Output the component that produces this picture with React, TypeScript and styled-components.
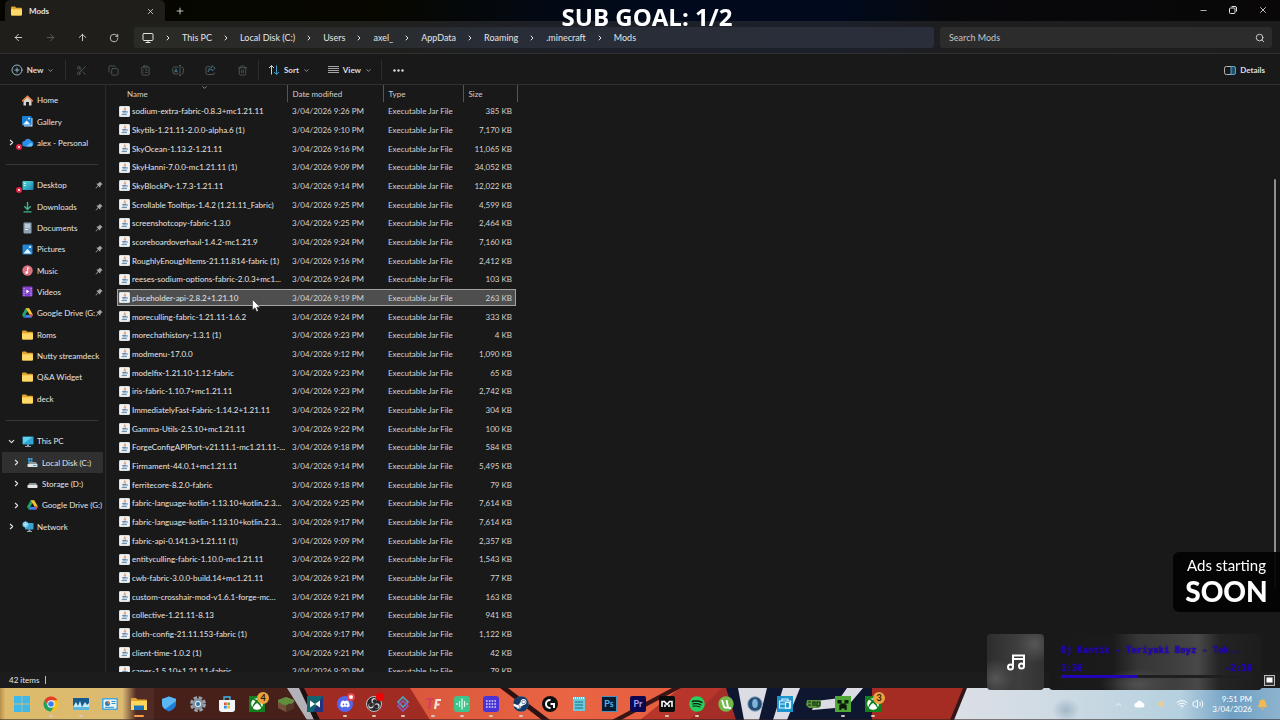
import React from 'react';
import styled, { createGlobalStyle, css } from 'styled-components';
import {
  ArrowLeft, ArrowRight, ArrowUp, Bell, ChevronDown, ChevronRight, ChevronUp, CirclePlus,
  ClipboardList, Copy, Minus, Monitor, Plus, RotateCw, Scissors, Search, Trash2,
  Volume2, Wifi, X,
} from 'lucide-react';
import { FaDiscord, FaSpotify, FaSteam, FaXbox } from 'react-icons/fa';

const GlobalStyle = createGlobalStyle`
  * { box-sizing: border-box; }
  body {
    margin: 0;
    background: #191919;
    color: #e4e4e4;
    font-family: Lato, "Open Sans", sans-serif;
    font-size: 8px;
    line-height: 12px;
    overflow: hidden;
  }
  button, input { font: inherit; color: inherit; }
  a { color: inherit; text-decoration: none; }
  svg { display: block; flex: none; }
`;

const Screen = styled.div`
  height: 100vh;
  display: flex;
  flex-direction: column;
`;

/* ---------- window chrome ---------- */

const TitleBar = styled.header`
  height: 21px;
  display: flex;
  padding-left: 5px;
  background: linear-gradient(90deg, #060600 0%, #070700 30%, #030913 42%, #000a1c 52%, #000a1c 66%, #07080c 74%, #090707 100%);
`;

const Tab = styled.div`
  width: 160px;
  display: flex;
  align-items: center;
  gap: 7px;
  padding: 1px 10px 0 6px;
  border-radius: 5px 5px 0 0;
  background: #1f1e1a;
  font-weight: 700;
`;

const TabTitle = styled.span`
  flex: 1;
`;

const PlainButton = styled.button`
  display: flex;
  align-items: center;
  justify-content: center;
  padding: 0;
  border: 0;
  background: none;
`;

const NewTab = styled(PlainButton)`
  width: 30px;
  padding-top: 1px;
`;

const WindowControls = styled.div`
  display: flex;
  margin-left: auto;
  padding-right: 2px;
`;

const ControlButton = styled(PlainButton)`
  width: 30px;
  height: 20px;
`;

const AddressRow = styled.div`
  height: 33px;
  display: flex;
  align-items: center;
  padding: 1px 8px 0 2px;
  border-bottom: 1px solid #30302f;
  background: linear-gradient(90deg, #1f1e1a 0%, #1f1f1c 30%, #1d2028 44%, #1c202a 66%, #1e1e20 74%, #1e1d1d 100%);
`;

const NavButton = styled(PlainButton)<{ $dim?: boolean }>`
  width: 32px;
  height: 21px;
  color: ${(p) => (p.$dim ? '#5d5d5a' : '#d8d8d8')};
`;

const Breadcrumbs = styled.nav`
  flex: 792;
  height: 21px;
  display: flex;
  align-items: center;
  gap: 10px;
  margin-left: 4px;
  padding-left: 8px;
  border-radius: 3px;
  background: linear-gradient(90deg, #2a2a26 0%, #2a2b2a 25%, #282d37 45%, #292e3a 100%);
  font-size: 9px;
`;

const SearchBox = styled.label`
  flex: 316;
  height: 21px;
  display: flex;
  align-items: center;
  margin-left: 6px;
  padding: 0 7px 0 9px;
  border-radius: 3px;
  background: #2c2c2c;
`;

const SearchInput = styled.input`
  flex: 1;
  min-width: 0;
  padding: 0;
  border: 0;
  outline: 0;
  background: none;
  font-size: 9px;
  &::placeholder { color: #c4c4c4; opacity: 1; }
`;

const CommandBar = styled.div`
  height: 31px;
  display: flex;
  align-items: center;
  padding: 2px 15px 0 0;
  border-bottom: 1px solid #313131;
  font-weight: 700;
`;

const CommandGroup = styled.div<{ $width: number; $last?: boolean }>`
  width: ${(p) => p.$width}px;
  height: 20px;
  display: flex;
  justify-content: space-around;
  border-right: ${(p) => (p.$last ? 0 : 1)}px solid #2d2d2d;
`;

const Command = styled(PlainButton)<{ $dim?: boolean }>`
  gap: 4px;
  color: ${(p) => (p.$dim ? '#4b5659' : '#dedede')};
`;

const DetailsButton = styled(Command)`
  margin-left: auto;
`;

/* ---------- navigation pane ---------- */

const Content = styled.div`
  flex: 1;
  min-height: 0;
  display: flex;
`;

const Sidebar = styled.nav`
  width: 106px;
  flex: none;
  padding: 4px 2px 0 2px;
  border-right: 1px solid #2b2b2b;
`;

const NavList = styled.ul`
  margin: 0;
  padding: 0;
  list-style: none;
`;

const NavItem = styled.li<{ $active?: boolean }>`
  height: 21px;
  background: ${(p) => (p.$active ? '#303030' : 'transparent')};
  &:nth-child(3n + 1) { height: 22px; }
`;

const NavLink = styled.a<{ $nested?: boolean }>`
  height: 100%;
  display: flex;
  align-items: center;
  padding-left: ${(p) => (p.$nested ? 10 : 5)}px;
`;

const Twisty = styled.span`
  width: 15px;
  flex: none;
`;

const NavIcon = styled.span`
  position: relative;
  width: 15px;
  flex: none;
`;

const ErrorBadge = styled.svg`
  position: absolute;
  left: -6px;
  bottom: -3px;
`;

const NavLabel = styled.span`
  flex: 1;
  min-width: 0;
  overflow: hidden;
  white-space: nowrap;
`;

const Divider = styled.hr`
  height: 1px;
  margin: 11px 5px 9px 4px;
  border: 0;
  background: #383838;
`;

/* ---------- file list ---------- */

const FilePane = styled.main`
  flex: 1;
  min-width: 0;
  overflow: hidden;
  padding-left: 10px;
`;

const FileTable = styled.table`
  width: 401px;
  table-layout: fixed;
  border-collapse: collapse;
`;

const HeadCell = styled.th<{ $width: number }>`
  position: relative;
  width: ${(p) => p.$width}px;
  height: 17px;
  padding: 0 5px;
  border-right: 1px solid #555;
  color: #d0d0d0;
  font-weight: 400;
  text-align: left;
  &:first-child { padding-left: 11px; }
`;

const SortCaret = styled.span`
  position: absolute;
  top: -1px;
  left: 50%;
`;

const FileRow = styled.tr<{ $selected: boolean }>`
  height: 19px;
  &:nth-child(3n + 1) { height: 18px; }
  ${(p) => p.$selected && css`
    background: linear-gradient(#4e4e4e, #4e4e4e) center / calc(100% - 2px) calc(100% - 2px) no-repeat;
    outline: 1px solid #a3a3a3;
    outline-offset: -2px;
  `}
`;

const Cell = styled.td<{ $end?: boolean }>`
  padding: 0 5px;
  color: #d2d2d2;
  text-align: ${(p) => (p.$end ? 'right' : 'left')};
  white-space: nowrap;
  &:first-child { padding: 0 0 0 3px; }
`;

const FileName = styled.div`
  display: flex;
  align-items: center;
  gap: 2px;
  color: #e6e6e6;
`;

const ScrollTrack = styled.div`
  width: 2px;
  margin-right: 4px;
  display: flex;
  flex-direction: column;
`;

const ScrollThumb = styled.div`
  flex: 70;
  border-radius: 1px;
  background: #8f8f8f;
`;

const ScrollGap = styled.div<{ $grow: number }>`
  flex: ${(p) => p.$grow};
`;

const StatusBar = styled.footer`
  height: 16px;
  display: flex;
  align-items: center;
  padding: 0 5px 0 9px;
  background: #1c1c1c;
`;

const StatusCount = styled.span`
  padding-right: 6px;
  border-right: 1px solid #bdbdbd;
  line-height: 8px;
`;

const ViewToggle = styled(PlainButton)`
  margin-left: auto;
`;

/* ---------- taskbar ---------- */

const Taskbar = styled.div`
  position: relative;
  height: 32px;
  flex: none;
  display: flex;
  padding-left: 7px;
  color: #fff;
`;

const Wallpaper = styled.svg`
  position: absolute;
  inset: 0;
  width: 100%;
  height: 100%;
`;

const Apps = styled.div`
  position: relative;
  display: flex;
`;

const AppButton = styled(PlainButton)<{ $run?: 'dot' | 'wide' }>`
  position: relative;
  width: 29px;
  height: 32px;
  &:nth-child(3n + 2) { width: 30px; }
  ${(p) => p.$run && css`
    &::after {
      content: "";
      position: absolute;
      bottom: 3px;
      width: ${p.$run === 'wide' ? 10 : 4}px;
      height: 2px;
      border-radius: 1px;
      background: ${p.$run === 'wide' ? '#f5a04a' : '#d9c3b8'};
    }
  `}
  ${(p) => p.$run === 'wide' && css`background: rgba(255, 255, 255, 0.05);`}
`;

const CountBadge = styled.span`
  position: absolute;
  top: 4px;
  right: 2px;
  width: 12px;
  height: 12px;
  border-radius: 50%;
  background: #eda23c;
  color: #2a1a08;
  font-size: 9px;
  font-weight: 700;
  line-height: 12px;
  text-align: center;
`;

const DotBadge = styled.span<{ $color: string; $ring: string }>`
  position: absolute;
  top: 5px;
  right: 4px;
  width: 8px;
  height: 8px;
  border: 2px solid ${(p) => p.$ring};
  border-radius: 50%;
  background: ${(p) => p.$color};
`;

const Tray = styled.div`
  position: relative;
  margin-left: auto;
  padding-right: 12px;
  display: flex;
  align-items: center;
`;

const TrayIcon = styled.span<{ $width: number }>`
  width: ${(p) => p.$width}px;
  display: flex;
  justify-content: center;
`;

const Clock = styled.time`
  width: 48px;
  margin-right: 5px;
  line-height: 10px;
  text-align: right;
`;

/* ---------- stream overlays ---------- */

const SubGoal = styled.div`
  position: fixed;
  top: 2px;
  left: 0;
  right: 0;
  padding-left: 14px;
  color: #fff;
  font-family: "Open Sans", sans-serif;
  font-size: 24px;
  font-weight: 700;
  line-height: 30px;
  text-align: center;
  pointer-events: none;
`;

const AdNotice = styled.aside`
  position: fixed;
  right: 0;
  bottom: 108px;
  width: 107px;
  height: 60px;
  padding-top: 4px;
  border-radius: 6px 0 0 6px;
  background: rgba(3, 3, 3, 0.94);
  color: #fff;
  font-size: 15px;
  line-height: 18px;
  text-align: center;
`;

const AdSoon = styled.strong`
  display: block;
  font-size: 28px;
  font-weight: 900;
  line-height: 34px;
`;

const Player = styled.aside`
  position: fixed;
  right: 18px;
  bottom: 30px;
  display: flex;
  gap: 5px;
`;

const AlbumArt = styled.div`
  width: 57px;
  height: 56px;
  display: flex;
  align-items: center;
  justify-content: center;
  border-radius: 4px;
  background:
    radial-gradient(circle at 84% 18%, #575757 0, rgba(80, 80, 80, 0) 28%),
    radial-gradient(circle at 15% 80%, #565656 0, rgba(80, 80, 80, 0) 30%),
    linear-gradient(90deg, #2d2d2d, #3e3e3e 55%, #333);
`;

const TrackPanel = styled.div`
  width: 213px;
  height: 56px;
  padding: 10px 10px 0 12px;
  border-radius: 4px;
  background:
    radial-gradient(ellipse at 42% 90%, #505050 0, rgba(70, 70, 70, 0) 22%),
    linear-gradient(90deg, #191919 0%, #1b1b1b 30%, #363636 42%, #3c3c3c 55%, #484848 70%, #242424 80%, #1c1c1c 100%);
  color: #2404b4;
  font-family: "DejaVu Sans Mono", monospace;
  font-size: 9px;
  font-weight: 700;
  text-shadow: 0 0 2px #1c0290;
  white-space: nowrap;
`;

const TrackTimes = styled.div`
  display: flex;
  justify-content: space-between;
  margin-top: 6px;
`;

const TrackBar = styled.div`
  height: 3px;
  margin-top: 1px;
  background: #1f1f22;
`;

const TrackFill = styled.div`
  width: 40%;
  height: 3px;
  background: #2405b6;
`;

const Cursor = styled.svg`
  position: fixed;
  left: 252px;
  top: 299px;
  pointer-events: none;
`;

/* ---------- drawings ---------- */

const FolderIcon = () => (
  <svg width="11" height="10" viewBox="0 0 11 10">
    <path d="M0 1.5Q0 .5 1 .5h3l1.2 1.2H10q1 0 1 1V8.500q0 1-1 1H1q-1 0-1-1z" fill="#e0a32e" />
    <path d="M0 3.200h10q1 0 1 .8V8.500q0 1-1 1H1q-1 0-1-1z" fill="#ffd967" />
  </svg>
);

const JarIcon = () => (
  <svg width="11" height="11" viewBox="0 0 11 11">
    <rect x=".5" y=".5" width="10" height="10" rx=".6" fill="#f0f2f4" stroke="#dde2e5" />
    <path d="M5.700 1.400c1.100 1-1.400 1.600-.3 3M7.200 2.400c-1.400.7-.4 1.300-1 2.200" fill="none" stroke="#d9813f" strokeWidth=".9" />
    <path d="M3.200 5.500h4M3.600 6.900h3.200M2.600 8.600h5.400M7.400 5.400c1.600-.2 1.300 1.300 0 1.600" fill="none" stroke="#5580a5" strokeWidth=".9" />
  </svg>
);

const HomeIcon = () => (
  <svg width="11" height="11" viewBox="0 0 11 11">
    <path d="M1.500 5v5q0 .6.600.6H4V7h3v3.600h1.900q.6 0 .6-.6V5L5.500 1.500z" fill="#d9d3d0" />
    <path d="M.6 5.800 5.500 1.300l4.900 4.500" fill="none" stroke="#e38849" strokeWidth="1.600" strokeLinecap="round" />
  </svg>
);

const PictureIcon = () => (
  <svg width="11" height="11" viewBox="0 0 11 11">
    <rect x=".5" y=".5" width="10" height="10" rx="1" fill="#2086d6" />
    <path d="M1.500 9.500 5.500 4.800l4 4.700z" fill="#e8f6ff" />
    <circle cx="8" cy="3" r="1" fill="#fff" />
  </svg>
);

const GalleryIcon = () => (
  <svg width="11" height="11" viewBox="0 0 11 11">
    <path d="M3 2h7.500v8.500H2V9z" fill="#bfe2f7" />
    <rect width="9.500" height="9.500" rx="1" fill="#1b7fd4" />
    <path d="M1 8.500 4.700 4.400l3.800 4.100z" fill="#eaf6ff" />
    <circle cx="7" cy="2.600" r=".9" fill="#fff" />
  </svg>
);

const CloudIcon = () => (
  <svg width="12" height="9" viewBox="0 0 12 9">
    <path d="M3 8.500a2.700 2.700 0 0 1-.3-5.400A3.500 3.500 0 0 1 9.200 3a2.800 2.800 0 0 1 .2 5.500z" fill="#2a8de8" />
    <path d="M4 8.500 9 4.500a2.500 2.500 0 0 1 .5 4z" fill="#66c5ff" />
  </svg>
);

const DesktopIcon = () => (
  <svg width="12" height="9" viewBox="0 0 12 9">
    <defs>
      <linearGradient id="desk" x2="1" y2="1"><stop stopColor="#5ce0e4" /><stop offset="1" stopColor="#1580a8" /></linearGradient>
    </defs>
    <rect x=".5" width="11" height="9" rx="1" fill="url(#desk)" />
    <path d="M2 2.500h1.500M2 4.500h1.500" stroke="#d8feff" />
  </svg>
);

const DownloadIcon = () => (
  <svg width="11" height="12" viewBox="0 0 11 12">
    <path d="M5.500 1v7M2.300 5.200l3.200 3.200 3.200-3.200M1.500 10.900h8" fill="none" stroke="#3fb887" strokeWidth="1.400" />
  </svg>
);

const DocumentIcon = () => (
  <svg width="11" height="12" viewBox="0 0 11 12">
    <rect x="1.500" y=".5" width="8" height="11" rx="1" fill="#8fa3b6" />
    <path d="M3 3h5M3 5h5M3 7.500h3" stroke="#e6edf3" />
  </svg>
);

const MusicIcon = () => (
  <svg width="11" height="11" viewBox="0 0 11 11">
    <circle cx="5.500" cy="5.500" r="5.200" fill="#dd7280" />
    <path d="M5.600 7.600V2.500l1.900 1" fill="none" stroke="#fff" />
    <circle cx="4.700" cy="7.600" r="1.300" fill="#fff" />
  </svg>
);

const VideoIcon = () => (
  <svg width="11" height="11" viewBox="0 0 11 11">
    <rect x=".5" y=".5" width="10" height="10" rx="1" fill="#8342cf" />
    <path d="M2 2v8M9 2v8" stroke="#d5b3ff" strokeDasharray="1.200 1.200" />
    <path d="M4.300 3.600v3.800L7.300 5.500z" fill="#fff" />
  </svg>
);

const DriveIcon = () => (
  <svg width="11" height="10" viewBox="0 0 11 10">
    <path d="M3.700.3h3.500L3.500 6.800l-1.700 2.900L0 6.700z" fill="#24a466" />
    <path d="M3.700.3h3.500L11 6.700H7.500z" fill="#fbc02d" />
    <path d="M3.600 6.700H11L9.200 9.700H1.800z" fill="#3b7ff0" />
    <path d="M7.500 6.700H11L9.200 9.700z" fill="#e5473a" />
    <path d="M5.500 3.600 3.600 6.700h3.700z" fill="#191919" />
  </svg>
);

const PcIcon = () => (
  <svg width="12" height="11" viewBox="0 0 12 11">
    <rect x=".5" y=".5" width="11" height="8" rx=".8" fill="#2fa7d2" />
    <path d="M1 8V1h9z" fill="#5fd3ea" />
    <path d="M5 8.500h2v1.500h2v1H3v-1h2z" fill="#8ea7b5" />
  </svg>
);

const DiskIcon = ({ windows = false }: { windows?: boolean }) => (
  <svg width="11" height="10" viewBox="0 0 11 10">
    {windows && <path d="M1 0h2v2H1zM3.500 0h2v2h-2zM1 2.500h2v2H1zM3.500 2.500h2v2h-2z" fill="#29a5e8" />}
    <path d="M2.500 4h6.500l1.500 2.500h-10z" fill="#8d9499" />
    <rect x=".5" y="6" width="10" height="3" rx=".8" fill="#e1e5e8" />
    {windows && <path d="M6 7.500h3.500" stroke="#3aa6d8" />}
  </svg>
);

const NetworkIcon = () => (
  <svg width="12" height="11" viewBox="0 0 12 11">
    <rect x="3" y="2" width="8.500" height="6.500" rx=".8" fill="#3aa3d2" />
    <path d="M6.500 8.500h2V10H10v1H5v-1h1.500z" fill="#8ea7b5" />
    <circle cx="3.500" cy="3.500" r="3" fill="#5cc8e8" />
    <path d="M.8 3.500h5.400M3.500.8q-2 2.700 0 5.400M3.500.8q2 2.700 0 5.400" fill="none" stroke="#d5f4ff" strokeWidth=".6" />
  </svg>
);

const PinIcon = () => (
  <svg width="8" height="8" viewBox="0 0 8 8">
    <path d="M4.800.4 7.600 3.200 6.500 3.700 5.400 5 5.200 6.700 3.400 5 1 7.500.5 7 3 4.600 1.300 2.800 3 2.600 4.300 1.500z" fill="#a5a5a5" />
  </svg>
);

const Badge = () => (
  <ErrorBadge width="6" height="6" viewBox="0 0 6 6">
    <circle cx="3" cy="3" r="3" fill="#e0203c" />
    <path d="M1.800 1.800l2.400 2.400M4.200 1.800 1.800 4.200" stroke="#fff" strokeWidth=".8" />
  </ErrorBadge>
);

const DetailsIcon = () => (
  <svg width="12" height="9" viewBox="0 0 12 9">
    <rect x=".5" y=".5" width="11" height="8" rx="1.800" fill="none" stroke="#b5b5b5" />
    <path d="M7 .5h2.700q1.800 0 1.800 1.800v4.400q0 1.800-1.800 1.800H7z" fill="#1e4e68" stroke="#4fa5cf" />
  </svg>
);

const ViewIcon = () => (
  <svg width="11" height="8" viewBox="0 0 11 8">
    <path d="M0 .5h11M0 2.500h11M0 4.500h11M0 6.500h11" stroke="#a5a5a5" />
  </svg>
);

const RenameIcon = () => (
  <svg width="12" height="11" viewBox="0 0 12 11" fill="none" stroke="currentColor">
    <path d="M6.500 2H2.300Q.8 2 .8 3.500v4Q.8 9 2.300 9h4.200M9.500 2h.3q1.500 0 1.500 1.500v4Q11.300 9 9.800 9h-.3M8 .5v10M7 .5h2M7 10.500h2" />
    <path d="M2.500 7.500 4 3.800l1.500 3.700M3 6.500h2" stroke="#3b7284" />
  </svg>
);

const ShareIcon = () => (
  <svg width="11" height="11" viewBox="0 0 11 11" fill="none" stroke="currentColor">
    <path d="M5 1.500H2.500Q1 1.500 1 3v5q0 1.500 1.500 1.500h5.500q1.500 0 1.500-1.500V7.500" />
    <path d="M3.200 7Q3.500 4 7 4V6l3.300-2.800L7 .6V2.500Q3 2.700 3.200 7z" stroke="#3b6472" />
  </svg>
);

/* ---------- data ---------- */

type Place = {
  label: string; icon: React.ReactNode; pinned?: boolean; error?: boolean;
  arrow?: 'right' | 'down'; nested?: boolean; active?: boolean;
};

const places: Place[][] = [
  [
    { label: 'Home', icon: <HomeIcon /> },
    { label: 'Gallery', icon: <GalleryIcon /> },
    { label: 'alex - Personal', icon: <CloudIcon />, error: true, arrow: 'right' },
  ],
  [
    { label: 'Desktop', icon: <DesktopIcon />, pinned: true, error: true },
    { label: 'Downloads', icon: <DownloadIcon />, pinned: true },
    { label: 'Documents', icon: <DocumentIcon />, pinned: true },
    { label: 'Pictures', icon: <PictureIcon />, pinned: true },
    { label: 'Music', icon: <MusicIcon />, pinned: true },
    { label: 'Videos', icon: <VideoIcon />, pinned: true },
    { label: 'Google Drive (G:)', icon: <DriveIcon />, pinned: true },
    { label: 'Roms', icon: <FolderIcon /> },
    { label: 'Nutty streamdeck', icon: <FolderIcon /> },
    { label: 'Q&A Widget', icon: <FolderIcon /> },
    { label: 'deck', icon: <FolderIcon /> },
  ],
  [
    { label: 'This PC', icon: <PcIcon />, arrow: 'down' },
    { label: 'Local Disk (C:)', icon: <DiskIcon windows />, arrow: 'right', nested: true, active: true },
    { label: 'Storage (D:)', icon: <DiskIcon />, arrow: 'right', nested: true },
    { label: 'Google Drive (G:)', icon: <DriveIcon />, arrow: 'right', nested: true },
    { label: 'Network', icon: <NetworkIcon />, arrow: 'right' },
  ],
];

const crumbs = ['This PC', 'Local Disk (C:)', 'Users', 'axel_', 'AppData', 'Roaming', '.minecraft', 'Mods'];

const files: [string, string, string][] = [
  ['sodium-extra-fabric-0.8.3+mc1.21.11', '9:26', '385'],
  ['Skytils-1.21.11-2.0.0-alpha.6 (1)', '9:10', '7,170'],
  ['SkyOcean-1.13.2-1.21.11', '9:16', '11,065'],
  ['SkyHanni-7.0.0-mc1.21.11 (1)', '9:09', '34,052'],
  ['SkyBlockPv-1.7.3-1.21.11', '9:14', '12,022'],
  ['Scrollable Tooltips-1.4.2 (1.21.11_Fabric)', '9:25', '4,599'],
  ['screenshotcopy-fabric-1.3.0', '9:25', '2,464'],
  ['scoreboardoverhaul-1.4.2-mc1.21.9', '9:24', '7,160'],
  ['RoughlyEnoughItems-21.11.814-fabric (1)', '9:16', '2,412'],
  ['reeses-sodium-options-fabric-2.0.3+mc1...', '9:24', '103'],
  ['placeholder-api-2.8.2+1.21.10', '9:19', '263'],
  ['moreculling-fabric-1.21.11-1.6.2', '9:24', '333'],
  ['morechathistory-1.3.1 (1)', '9:23', '4'],
  ['modmenu-17.0.0', '9:12', '1,090'],
  ['modelfix-1.21.10-1.12-fabric', '9:23', '65'],
  ['iris-fabric-1.10.7+mc1.21.11', '9:23', '2,742'],
  ['ImmediatelyFast-Fabric-1.14.2+1.21.11', '9:22', '304'],
  ['Gamma-Utils-2.5.10+mc1.21.11', '9:22', '100'],
  ['ForgeConfigAPIPort-v21.11.1-mc1.21.11-...', '9:18', '584'],
  ['Firmament-44.0.1+mc1.21.11', '9:14', '5,495'],
  ['ferritecore-8.2.0-fabric', '9:18', '79'],
  ['fabric-language-kotlin-1.13.10+kotlin.2.3...', '9:25', '7,614'],
  ['fabric-language-kotlin-1.13.10+kotlin.2.3...', '9:17', '7,614'],
  ['fabric-api-0.141.3+1.21.11 (1)', '9:09', '2,357'],
  ['entityculling-fabric-1.10.0-mc1.21.11', '9:22', '1,543'],
  ['cwb-fabric-3.0.0-build.14+mc1.21.11', '9:21', '77'],
  ['custom-crosshair-mod-v1.6.1-forge-mc...', '9:21', '163'],
  ['collective-1.21.11-8.13', '9:17', '941'],
  ['cloth-config-21.11.153-fabric (1)', '9:17', '1,122'],
  ['client-time-1.0.2 (1)', '9:21', '42'],
  ['capes-1.5.10+1.21.11-fabric', '9:20', '79'],
];

type App = { name: string; art: React.ReactNode; run?: 'dot' | 'wide'; count?: number; dot?: [string, string] };

const Art = ({ children }: { children: React.ReactNode }) => (
  <svg width="16" height="16" viewBox="0 0 16 16">{children}</svg>
);

const XboxArt = () => (
  <Art>
    <rect width="16" height="16" fill="#12801e" />
    <FaXbox x="2" y="2" size={12} color="#fff" />
  </Art>
);

const apps: App[] = [
  { name: 'Start', art: <Art><path d="M0 0h7.600v7.600H0zM8.400 0H16v7.600H8.400zM0 8.400h7.600V16H0zM8.400 8.400H16V16H8.400z" fill="#3fb9ea" /></Art> },
  {
    name: 'Chrome', run: 'dot', art: (
      <Art>
        <circle cx="8" cy="8" r="7.500" fill="#fbc116" />
        <path d="M1.500 4.200A7.500 7.500 0 0 1 14.500 4.300H8L5 9.800z" fill="#e33b2e" />
        <path d="M1.500 4.200A7.500 7.500 0 0 0 8 15.500L11.300 9.800 5 9.900z" fill="#1da462" />
        <circle cx="8" cy="8" r="3.700" fill="#fff" /><circle cx="8" cy="8" r="2.800" fill="#3a7de8" />
      </Art>
    ),
  },
  {
    name: 'Monitor', run: 'dot', art: (
      <Art><rect y="2" width="16" height="12" fill="#175b8c" /><path d="M0 11 3 6l2 4 2-5 2 6 3-5 2 3 2-2v7H0z" fill="#c9ecf8" /><path d="M0 11h16v3H0z" fill="#58b7de" /></Art>
    ),
  },
  {
    name: 'Control panel', art: (
      <Art><rect y="2" width="16" height="12" rx="1" fill="#49a9d4" /><rect x="1.500" y="3.500" width="13" height="9" fill="#e6f5fb" /><circle cx="5.500" cy="7.500" r="2.500" fill="#2c7bb2" /><path d="M5.500 7.500V5A2.500 2.500 0 0 1 8 7.500z" fill="#e98b3d" /><path d="M9.500 5.500h4M9.500 7.500h4M3 11.300h9" stroke="#3b8dbd" /></Art>
    ),
  },
  {
    name: 'File explorer', run: 'wide', art: (
      <Art><path d="M0 3q0-1 1-1h4l1.500 1.500H15q1 0 1 1V14H0z" fill="#e2a52d" /><path d="M0 5h16v9H0z" fill="#ffd65c" /><path d="M3 9.500h10V14H3z" fill="#1a75b8" /></Art>
    ),
  },
  {
    name: 'Security', art: (
      <Art><path d="M8 .5 15 3v5q0 5-7 7.500Q1 13 1 8V3z" fill="#1f7ed8" /><path d="M8 .5 15 3v2L4 13.300Q1 11 1 8V3z" fill="#5ab8f5" /></Art>
    ),
  },
  {
    name: 'Settings', art: (
      <Art><circle cx="8" cy="8" r="6.500" fill="none" stroke="#98a3ae" strokeWidth="2.800" strokeDasharray="3.400 1.700" /><circle cx="8" cy="8" r="5.600" fill="#87929e" /><circle cx="8" cy="8" r="3" fill="#e8eef3" /><circle cx="8" cy="8" r="2" fill="#2a75b3" /></Art>
    ),
  },
  {
    name: 'Store', art: (
      <Art><path d="M5 4V1h6v3" fill="none" stroke="#44b4ea" strokeWidth="1.400" /><path d="M0 4h16v9q0 3-3 3H3q-3 0-3-3z" fill="#f2f5f7" /><path d="M5 6.500h2.700v2.700H5z" fill="#e8503a" /><path d="M8.300 6.500H11v2.700H8.300z" fill="#6db33f" /><path d="M5 9.800h2.700v2.700H5z" fill="#2b91d9" /><path d="M8.300 9.800H11v2.700H8.300z" fill="#f5b52b" /></Art>
    ),
  },
  { name: 'Xbox', count: 4, art: <XboxArt /> },
  {
    name: 'Grass block', art: (
      <Art><path d="M0 4 8 1l8 3v8l-8 4-8-4z" fill="#77503a" /><path d="M8 8v8l8-4V4z" fill="#543626" /><path d="M0 4 8 1l8 3v2l-3 2-2-.5L8 9.500 6 8.500 4 8.500 2 6.500 0 6.500z" fill="#5f8f3d" /></Art>
    ),
  },
  {
    name: 'Medal', art: (
      <Art><rect width="16" height="16" fill="#14636f" /><path d="M16 0v16H6z" fill="#23317f" /><path d="M3 4.500 8 8l5-3.500v7L8 8l-5 3.500z" fill="#fff" /></Art>
    ),
  },
  {
    name: 'Discord', run: 'dot', dot: ['#fff', '#e8434d'], art: (
      <Art><circle cx="8" cy="8" r="8" fill="#5666ea" /><FaDiscord x="3" y="3" size={10} color="#fff" /></Art>
    ),
  },
  {
    name: 'OBS', run: 'dot', dot: ['#f00000', '#f00000'], art: (
      <Art><circle cx="8" cy="8" r="7.500" fill="#25252a" stroke="#c7c5c5" /><circle cx="8" cy="4.700" r="2.600" fill="#cfcfcf" /><circle cx="4.900" cy="9.900" r="2.600" fill="#cfcfcf" /><circle cx="11.100" cy="9.900" r="2.600" fill="#cfcfcf" /><circle cx="8.800" cy="5.200" r="2" fill="#25252a" /><circle cx="5" cy="9" r="2" fill="#25252a" /><circle cx="10.300" cy="10.500" r="2" fill="#25252a" /></Art>
    ),
  },
  {
    name: 'Streaming', run: 'dot', art: (
      <Art><path d="M8 1 13 6 8 11 3 6z" fill="none" stroke="#49a7c7" strokeWidth="1.600" /><path d="M8 5 13 10 8 15 3 10z" fill="none" stroke="#8c59bd" strokeWidth="1.600" /></Art>
    ),
  },
  {
    name: 'TF', run: 'dot', art: (
      <Art><path d="M1 3h8M5.500 3 4 13" stroke="#d4405c" strokeWidth="2.200" fill="none" /><path d="M10 13 11.500 4H16M10.500 8.500h4" stroke="#f3e3e0" strokeWidth="2.200" fill="none" /></Art>
    ),
  },
  {
    name: 'Voicemod', run: 'dot', art: (
      <Art><rect width="16" height="16" rx="3" fill="#3ec48a" /><path d="M3 7v2M5.500 5v6M8 2.500v11M10.500 5v6M13 7v2" stroke="#e5fff3" strokeWidth="1.200" /></Art>
    ),
  },
  {
    name: 'Stream deck', run: 'dot', art: (
      <Art><rect width="16" height="16" rx="3" fill="#4934d6" /><path d="M3 5h11M3 8h11M3 11h11" stroke="#d7d2ff" strokeWidth="1.600" strokeDasharray="1.600 1.200" /></Art>
    ),
  },
  {
    name: 'Steam', run: 'dot', art: <Art><circle cx="8" cy="8" r="7.500" fill="#fff" /><FaSteam size={16} color="#153a68" /></Art>,
  },
  {
    name: 'Logitech', art: (
      <Art><circle cx="8" cy="8" r="8" fill="#101010" /><path d="M8.500 4H8a4 4 0 0 0 0 8h.5M8.500 8H12v4" fill="none" stroke="#fff" strokeWidth="2" /></Art>
    ),
  },
  {
    name: 'Notepad', art: (
      <Art><rect x="2" y="1" width="12" height="14" fill="#66c9dc" /><path d="M2 2h12" stroke="#e4f9fd" strokeWidth="2" strokeDasharray="1 1" /><path d="M4 6h8M4 9h8M4 12h8" stroke="#216c80" /></Art>
    ),
  },
  {
    name: 'Photoshop', art: (
      <Art><rect x=".5" y=".5" width="15" height="15" fill="#071c30" stroke="#4a91bd" /><text x="8" y="11" textAnchor="middle" fontSize="9" fontWeight="700" fill="#58b6f5">Ps</text></Art>
    ),
  },
  {
    name: 'Premiere', art: (
      <Art><rect width="16" height="16" rx="2" fill="#0d0650" /><text x="8" y="11" textAnchor="middle" fontSize="9" fontWeight="700" fill="#a8a2ff">Pr</text></Art>
    ),
  },
  {
    name: 'Modrinth', run: 'dot', art: (
      <Art><rect width="16" height="16" rx="2" fill="#0b0b0b" /><path d="M3 11V5.500h2.500L8 8.500l2.500-3H13V11M6 11V8.500M10 11V8.500" fill="none" stroke="#fff" strokeWidth="1.600" /></Art>
    ),
  },
  {
    name: 'Spotify', run: 'dot', art: <Art><circle cx="8" cy="8" r="7" fill="#0d2113" /><FaSpotify size={16} color="#27cf5f" /></Art>,
  },
  {
    name: 'uTorrent', art: (
      <Art><circle cx="8" cy="8" r="7.700" fill="#74b84a" /><path d="M4 4 5.800 9.800Q7 13 10 11L8.500 4M10 11q1 1.500 3 1" fill="none" stroke="#fff" strokeWidth="1.900" /></Art>
    ),
  },
  {
    name: 'Daemon', art: (
      <Art><circle cx="8" cy="8" r="7.300" fill="#284c74" stroke="#8fb0cb" /><ellipse cx="8" cy="7.500" rx="2.800" ry="4.500" fill="#7cb5dc" /></Art>
    ),
  },
  {
    name: 'PC manager', art: (
      <Art><rect width="16" height="16" fill="#1e94cf" /><path d="M2.500 5h11v7h-11zM5 5V3h6v2M2.500 8h6M8.500 6.500h4v6h-4z" fill="none" stroke="#d9f2ff" strokeWidth="1.200" /></Art>
    ),
  },
  {
    name: 'Crab', art: (
      <Art><path d="M1 4h13l1 3-2 5H3L0 9z" fill="#5a963c" /><path d="M2 6h3M2 9h3M7 10V6h2v4M11 6h3v4h-3z" fill="none" stroke="#153110" strokeWidth="1.200" /></Art>
    ),
  },
  {
    name: 'Minecraft', run: 'dot', art: (
      <Art><rect width="16" height="16" fill="#4fa836" /><path d="M2.500 4h4v3.500h3V4h4v3.500h-3v1.200h1.200V14h-2v-1.500H6.300V14h-2V8.700h1.200V7.500h-3z" fill="#0c180a" /></Art>
    ),
  },
  { name: 'Xbox Game Bar', run: 'dot', count: 3, art: <XboxArt /> },
];

function PlaceArrow({ kind }: { kind?: 'right' | 'down' }) {
  if (!kind) return null;
  return kind === 'right' ? <ChevronRight size={9} strokeWidth={3} /> : <ChevronDown size={9} strokeWidth={3} />;
}

export default function App() {
  return (
    <Screen>
      <GlobalStyle />
      <TitleBar>
        <Tab>
          <FolderIcon />
          <TabTitle>Mods</TabTitle>
          <PlainButton aria-label="Close tab"><X size={9} /></PlainButton>
        </Tab>
        <NewTab aria-label="New tab"><Plus size={10} /></NewTab>
        <WindowControls>
          <ControlButton aria-label="Minimize"><Minus size={9} /></ControlButton>
          <ControlButton aria-label="Restore">
            <svg width="8" height="8" viewBox="0 0 8 8" fill="none" stroke="currentColor">
              <rect x=".5" y="2" width="5.500" height="5.500" rx="1" />
              <path d="M2.500.5H6Q7.500.5 7.500 2v3.500" />
            </svg>
          </ControlButton>
          <ControlButton aria-label="Close"><X size={10} /></ControlButton>
        </WindowControls>
      </TitleBar>

      <AddressRow>
        <NavButton aria-label="Back"><ArrowLeft size={11} /></NavButton>
        <NavButton aria-label="Forward" $dim><ArrowRight size={11} /></NavButton>
        <NavButton aria-label="Up"><ArrowUp size={11} /></NavButton>
        <NavButton aria-label="Refresh"><RotateCw size={10} /></NavButton>
        <Breadcrumbs aria-label="Path">
          <Monitor size={12} />
          {crumbs.map((c) => (
            <React.Fragment key={c}>
              <ChevronRight size={8} strokeWidth={3} />
              <a href="#path">{c}</a>
            </React.Fragment>
          ))}
        </Breadcrumbs>
        <SearchBox>
          <SearchInput type="text" placeholder="Search Mods" aria-label="Search Mods" />
          <Search size={10} />
        </SearchBox>
      </AddressRow>

      <CommandBar>
        <CommandGroup $width={66}>
          <Command><CirclePlus size={12} color="#8fb8c6" /> New <ChevronDown size={7} /></Command>
        </CommandGroup>
        <CommandGroup $width={193}>
          <Command $dim aria-label="Cut"><Scissors size={11} /></Command>
          <Command $dim aria-label="Copy"><Copy size={11} /></Command>
          <Command $dim aria-label="Paste"><ClipboardList size={11} /></Command>
          <Command $dim aria-label="Rename"><RenameIcon /></Command>
          <Command $dim aria-label="Share"><ShareIcon /></Command>
          <Command $dim aria-label="Delete"><Trash2 size={11} /></Command>
        </CommandGroup>
        <CommandGroup $width={123}>
          <Command>
            <svg width="12" height="10" viewBox="0 0 12 10" fill="none">
              <path d="M3.500 9.500v-9M1 3 3.500.5 6 3" stroke="#d0d0d0" />
              <path d="M8.500.5v9M6 7l2.500 2.500L11 7" stroke="#3f9cc4" />
            </svg>
            Sort <ChevronDown size={7} />
          </Command>
          <Command><ViewIcon /> View <ChevronDown size={7} /></Command>
        </CommandGroup>
        <CommandGroup $width={32} $last>
          <Command aria-label="More">
            <svg width="11" height="3" viewBox="0 0 11 3" fill="currentColor">
              <circle cx="1.500" cy="1.500" r="1.200" /><circle cx="5.500" cy="1.500" r="1.200" /><circle cx="9.500" cy="1.500" r="1.200" />
            </svg>
          </Command>
        </CommandGroup>
        <DetailsButton><DetailsIcon /> Details</DetailsButton>
      </CommandBar>

      <Content>
        <Sidebar aria-label="Places">
          {places.map((group, g) => (
            <React.Fragment key={g}>
              {g > 0 && <Divider />}
              <NavList>
                {group.map((p) => (
                  <NavItem key={p.label} $active={p.active}>
                    <NavLink href="#place" $nested={p.nested}>
                      <Twisty><PlaceArrow kind={p.arrow} /></Twisty>
                      <NavIcon>{p.icon}{p.error && <Badge />}</NavIcon>
                      <NavLabel>{p.label}</NavLabel>
                      {p.pinned && <PinIcon />}
                    </NavLink>
                  </NavItem>
                ))}
              </NavList>
            </React.Fragment>
          ))}
        </Sidebar>

        <FilePane>
          <FileTable>
            <thead>
              <tr>
                <HeadCell $width={171}>Name<SortCaret><ChevronDown size={7} /></SortCaret></HeadCell>
                <HeadCell $width={96}>Date modified</HeadCell>
                <HeadCell $width={80}>Type</HeadCell>
                <HeadCell $width={54}>Size</HeadCell>
              </tr>
            </thead>
            <tbody>
              {files.map(([name, time, size], i) => (
                <FileRow key={i} $selected={name.startsWith('placeholder')}>
                  <Cell><FileName><JarIcon />{name}</FileName></Cell>
                  <Cell>3/04/2026 {time} PM</Cell>
                  <Cell>Executable Jar File</Cell>
                  <Cell $end>{size} KB</Cell>
                </FileRow>
              ))}
            </tbody>
          </FileTable>
        </FilePane>
        <ScrollTrack>
          <ScrollGap $grow={16} />
          <ScrollThumb />
          <ScrollGap $grow={14} />
        </ScrollTrack>
      </Content>

      <StatusBar>
        <StatusCount>42 items</StatusCount>
        <ViewToggle aria-label="Large thumbnails">
          <svg width="11" height="11" viewBox="0 0 11 11">
            <rect x=".5" y=".5" width="10" height="10" fill="#333" stroke="#b9b9b9" />
            <rect x="2.500" y="2.500" width="6" height="5" fill="#fff" />
          </svg>
        </ViewToggle>
      </StatusBar>

      <Taskbar>
        <Wallpaper viewBox="0 0 1280 32" preserveAspectRatio="none" aria-hidden="true">
          <defs>
            <linearGradient id="sand"><stop stopColor="#b98f4a" /><stop offset=".04" stopColor="#dcbb6c" /><stop offset=".9" stopColor="#dcba70" /><stop offset="1" stopColor="#4b2019" /></linearGradient>
            <linearGradient id="sky"><stop stopColor="#dcdfe6" /><stop offset=".3" stopColor="#cfdbe4" /><stop offset=".7" stopColor="#b5d0df" /><stop offset=".85" stopColor="#6f9fc3" /><stop offset="1" stopColor="#8db4cf" /></linearGradient>
            <linearGradient id="coral"><stop stopColor="#d9573c" /><stop offset=".5" stopColor="#ea6543" /><stop offset="1" stopColor="#e25a3e" /></linearGradient>
            <radialGradient id="smudge"><stop stopColor="#a3b8c8" /><stop offset="1" stopColor="#a3b8c8" stopOpacity="0" /></radialGradient>
          </defs>
          <rect width="1280" height="32" fill="#47201a" />
          <rect width="136" height="32" fill="url(#sand)" />
          <path d="M287 0h16l16 32h-12z" fill="#b3b2b9" />
          <path d="M300 0h122l14 32H318z" fill="#a02b23" />
          <path d="M299 0h5l16 32h-6z" fill="#1b1113" />
          <path d="M410 0h320v32H430z" fill="url(#coral)" />
          <path d="M500 0h8l42 32h-8z" fill="#2c1214" />
          <path d="M680 0h60v32H640z" fill="#b7352a" />
          <path d="M672 0h9l-60 32h-9z" fill="#3a1517" />
          <path d="M724 0h160v32H690z" fill="#0e1630" />
          <path d="M690 32 722 0h4l10 32z" fill="#a42e27" />
          <path d="M738 0h29l-8 32h-15z" fill="#dcdce4" />
          <path d="M783 0h17l-13 32h-14z" fill="#dcdce4" />
          <path d="M847 0h16l-16 19-35 3 4-9 24-3z" fill="#dcdce4" />
          <path d="M872 0h93l-13 32H872z" fill="#a52c23" />
          <path d="M966 0h314v32H952z" fill="url(#sky)" />
          <path d="M963 0h4l-13 32h-4z" fill="#31161a" />
          <ellipse cx="1066" cy="22" rx="14" ry="12" fill="url(#smudge)" />
          <rect y="31" width="1280" height="1" fill="#2b2020" opacity=".55" />
        </Wallpaper>
        <Apps>
          {apps.map((a) => (
            <AppButton key={a.name} aria-label={a.name} $run={a.run}>
              {a.art}
              {a.count && <CountBadge>{a.count}</CountBadge>}
              {a.dot && <DotBadge $color={a.dot[0]} $ring={a.dot[1]} />}
            </AppButton>
          ))}
        </Apps>
        <Tray>
          <TrayIcon $width={20}><ChevronUp size={9} /></TrayIcon>
          <TrayIcon $width={22}>
            <svg width="11" height="8" viewBox="0 0 12 9"><path d="M3 8.500a2.700 2.700 0 0 1-.3-5.400A3.500 3.500 0 0 1 9.200 3a2.800 2.800 0 0 1 .2 5.500z" fill="#fff" /></svg>
          </TrayIcon>
          <TrayIcon $width={22}>
            <svg width="8" height="8" viewBox="0 0 8 8"><circle cx="4" cy="4" r="3" fill="#e5cf9a" /></svg>
          </TrayIcon>
          <TrayIcon $width={20}><Wifi size={12} /></TrayIcon>
          <TrayIcon $width={12}><Volume2 size={12} /></TrayIcon>
          <Clock>9:51 PM<br />3/04/2026</Clock>
          <Bell size={11} fill="#f6b94e" color="#f6b94e" />
        </Tray>
      </Taskbar>

      <SubGoal>SUB GOAL: 1/2</SubGoal>
      <AdNotice>Ads starting<AdSoon>SOON</AdSoon></AdNotice>
      <Player>
        <AlbumArt>
          <svg width="20" height="20" viewBox="0 0 20 20" fill="none" stroke="#fff" strokeWidth="2">
            <path d="M7 15V3.500h11V13.500M7 7h11" />
            <circle cx="4.500" cy="15" r="2.500" /><circle cx="15.500" cy="14" r="2.500" />
          </svg>
        </AlbumArt>
        <TrackPanel>
          <div>Dj Kantik - Teriyaki Boyz - Tok..</div>
          <TrackTimes><span>1:38</span><span>-2:18</span></TrackTimes>
          <TrackBar><TrackFill /></TrackBar>
        </TrackPanel>
      </Player>
      <Cursor width="8" height="13" viewBox="0 0 8 13">
        <path d="M.5.500v10.500l2.500-2.300L4.600 12.500l1.700-.7L4.700 8.200H8z" fill="#fff" stroke="#222" strokeWidth=".5" />
      </Cursor>
    </Screen>
  );
}
